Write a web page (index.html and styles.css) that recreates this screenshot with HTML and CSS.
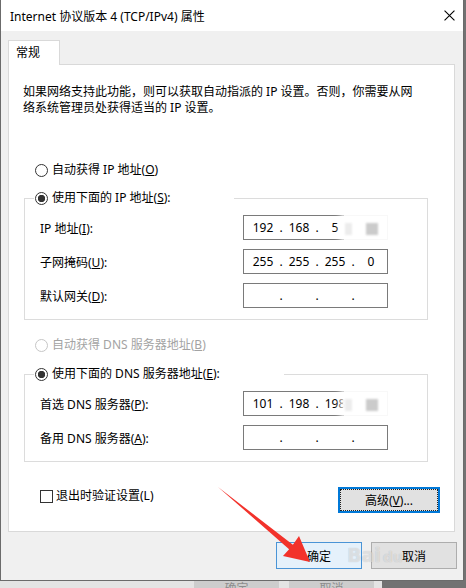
FILE: index.html
```html
<!DOCTYPE html>
<html lang="zh-CN">
<head>
    <meta charset="UTF-8">
    <meta name="viewport" content="width=device-width, initial-scale=1.0">
    <title>Internet 协议版本 4 (TCP/IPv4) 属性</title>
    <link rel="stylesheet" href="styles.css">
</head>
<body>
    <div class="window">
        <div class="titlebar">
            <span class="title">Internet 协议版本 4 (TCP/IPv4) 属性</span>
            <svg class="close" viewBox="0 0 10 10" width="11" height="11">
                <path d="M0.5 0.5 L9.5 9.5 M9.5 0.5 L0.5 9.5" stroke="#000" stroke-width="1" fill="none"/>
            </svg>
        </div>

        <div class="client">
            <div class="tab">常规</div>
            <div class="panel">
                <p class="desc">如果网络支持此功能，则可以获取自动指派的 IP 设置。否则，你需要从网络系统管理员处获得适当的 IP 设置。</p>

                <label class="radio first"><span class="mark"></span>自动获得 IP 地址(<u>O</u>)</label>

                <fieldset class="group">
                    <legend class="legend-ip"><label class="radio"><span class="mark on"></span>使用下面的 IP 地址(<u>S</u>):</label></legend>
                    <div class="field">
                        <span class="label">IP 地址(<u>I</u>):</span>
                        <div class="ip">
                            <span class="oct">192</span><span class="sep">.</span><span class="oct">168</span><span class="sep">.</span><span class="oct">5</span><span class="sep"></span><span class="oct"></span>
                            <div class="smudge"><span class="patch light"></span><span class="patch dark"></span></div>
                        </div>
                    </div>
                    <div class="field">
                        <span class="label">子网掩码(<u>U</u>):</span>
                        <div class="ip">
                            <span class="oct">255</span><span class="sep">.</span><span class="oct">255</span><span class="sep">.</span><span class="oct">255</span><span class="sep">.</span><span class="oct">0</span>
                        </div>
                    </div>
                    <div class="field">
                        <span class="label">默认网关(<u>D</u>):</span>
                        <div class="ip">
                            <span class="oct"></span><span class="sep">.</span><span class="oct"></span><span class="sep">.</span><span class="oct"></span><span class="sep">.</span><span class="oct"></span>
                        </div>
                    </div>
                </fieldset>

                <label class="radio dns-auto disabled"><span class="mark"></span>自动获得 DNS 服务器地址(<u>B</u>)</label>

                <fieldset class="group dns">
                    <legend class="legend-dns"><label class="radio"><span class="mark on"></span>使用下面的 DNS 服务器地址(<u>E</u>):</label></legend>
                    <div class="field">
                        <span class="label">首选 DNS 服务器(<u>P</u>):</span>
                        <div class="ip">
                            <span class="oct">101</span><span class="sep">.</span><span class="oct">198</span><span class="sep">.</span><span class="oct">198</span><span class="sep"></span><span class="oct"></span>
                            <div class="smudge"><span class="patch light"></span><span class="patch dark"></span></div>
                        </div>
                    </div>
                    <div class="field">
                        <span class="label">备用 DNS 服务器(<u>A</u>):</span>
                        <div class="ip">
                            <span class="oct"></span><span class="sep">.</span><span class="oct"></span><span class="sep">.</span><span class="oct"></span><span class="sep">.</span><span class="oct"></span>
                        </div>
                    </div>
                </fieldset>

                <div class="bottom-row">
                    <label class="check"><span class="box"></span>退出时验证设置(L)</label>
                    <button class="btn advanced">高级(<u>V</u>)...</button>
                </div>
            </div>

            <div class="actions">
                <button class="btn hover">确定</button>
                <button class="btn">取消</button>
            </div>
        </div>
    </div>

    <div class="behind">
        <span class="ghost">确定</span>
        <span class="ghost">取消</span>
    </div>

    <div class="watermark">Bai<span class="paw">du</span></div>

    <svg class="arrow" viewBox="0 0 466 588" width="466" height="588">
        <polygon points="218,487 292.9,544.7 299,536 310,562 283,556 289.1,549.3" fill="#f2322b"/>
    </svg>
</body>
</html>
```

FILE: styles.css
```css
* {
    margin: 0;
    padding: 0;
    box-sizing: border-box;
}

body {
    width: 466px;
    height: 588px;
    overflow: hidden;
    position: relative;
    background-color: #727272;
    font-family: "Noto Sans", "Noto Sans CJK SC", sans-serif;
    font-size: 12px;
    color: #000;
}

.window {
    width: 464px;
    height: 581px;
    background-color: #f0f0f0;
    border: 1px solid #6b6b6b;
    border-top: none;
    display: flex;
    flex-direction: column;
}

.titlebar {
    height: 31px;
    background-color: #fff;
    display: flex;
    align-items: center;
    justify-content: space-between;
    padding: 0 8px 0 9px;
}

.close {
    display: block;
}

.client {
    padding: 9px 0 0 7px;
}

.tab {
    position: relative;
    z-index: 1;
    width: 52px;
    height: 25px;
    margin-bottom: -1px;
    padding-left: 7px;
    line-height: 23px;
    background-color: #fff;
    border: 1px solid #d9d9d9;
    border-bottom: none;
}

.panel {
    width: 447px;
    height: 468px;
    background-color: #fff;
    border: 1px solid #d9d9d9;
    padding: 19px 14px 0 14px;
}

.desc {
    line-height: 16px;
    width: 400px;
}

.radio {
    display: flex;
    align-items: center;
    height: 16px;
    line-height: 16px;
    white-space: nowrap;
}

.radio.first {
    margin: 46px 0 0 12px;
}

.radio.dns-auto {
    margin: 17px 0 0 12px;
}

.mark {
    width: 13px;
    height: 13px;
    margin-right: 4px;
    border: 1px solid #333;
    border-radius: 50%;
    background-color: #fff;
    flex-shrink: 0;
}

.mark.on {
    background: radial-gradient(circle, #333 0, #333 3.4px, #fff 4px);
}

.disabled {
    color: #a3a3a3;
}

.disabled .mark {
    border-color: #c6c6c6;
}

.group {
    margin: 12px 12px 0 1px;
    padding: 0 0 11px 0;
    border: 1px solid #dcdcdc;
}

.group.dns {
    margin-top: 13px;
}

.group legend {
    margin-left: 9px;
    padding-left: 1px;
}

.legend-ip {
    width: 200px;
}

.legend-dns {
    width: 250px;
}

.field {
    display: flex;
    align-items: center;
    margin-top: 9px;
    padding-left: 15px;
}

.label {
    width: 203px;
}

.ip {
    position: relative;
    width: 145px;
    height: 25px;
    border: 1px solid #7a7a7a;
    display: flex;
    align-items: center;
    padding-left: 6px;
    background-color: #fff;
}

.oct {
    width: 26px;
    text-align: center;
}

.sep {
    width: 10px;
    text-align: center;
}

.smudge {
    position: absolute;
    left: 99px;
    top: -7px;
    width: 52px;
    height: 38px;
    background-color: rgba(255, 255, 255, 0.95);
    border-radius: 10px;
    box-shadow: 0 0 6px 3px rgba(255, 255, 255, 0.9);
}

.patch {
    position: absolute;
    top: 14px;
    height: 12px;
    filter: blur(1px);
}

.patch.light {
    left: 2px;
    width: 7px;
    background-color: #ececec;
}

.patch.dark {
    left: 23px;
    width: 12px;
    background-color: #cbcbcb;
}

.bottom-row {
    display: flex;
    justify-content: space-between;
    align-items: flex-start;
    margin-top: 25px;
    padding-left: 17px;
}

.check {
    display: flex;
    align-items: center;
    margin-top: 1px;
    line-height: 16px;
}

.box {
    width: 13px;
    height: 13px;
    margin-right: 3px;
    border: 1px solid #333;
    background-color: #fff;
}

.btn {
    width: 86px;
    height: 27px;
    font-family: inherit;
    font-size: 12px;
    color: #000;
    background-color: #e1e1e1;
    border: 1px solid #adadad;
}

.btn.hover {
    background-color: #e5f1fb;
    border-color: #4a94d6;
}

.btn.advanced {
    width: 102px;
    height: 26px;
    border: 2px solid #0078d7;
    outline: 1px dotted #222;
    outline-offset: -3px;
}

.actions {
    display: flex;
    justify-content: flex-end;
    gap: 9px;
    margin-top: 10px;
    padding-right: 6px;
}

.behind {
    width: 382px;
    height: 7px;
    overflow: hidden;
    display: flex;
    gap: 10px;
    padding-left: 194px;
    background-color: #e4e4e4;
}

.ghost {
    width: 85px;
    height: 7px;
    background-color: #cdcdcd;
    color: #8c8c8c;
    text-align: center;
    line-height: 16px;
    font-size: 12px;
}

.watermark {
    position: absolute;
    left: 347px;
    top: 544px;
    font-family: "DejaVu Sans", sans-serif;
    font-size: 19px;
    font-weight: bold;
    color: rgba(255, 255, 255, 0.5);
    text-shadow: 0 0 1px rgba(0, 0, 0, 0.22);
    pointer-events: none;
}

.paw {
    font-size: 14px;
    margin-left: 2px;
}

.arrow {
    position: absolute;
    left: 0;
    top: 0;
    pointer-events: none;
}
```
